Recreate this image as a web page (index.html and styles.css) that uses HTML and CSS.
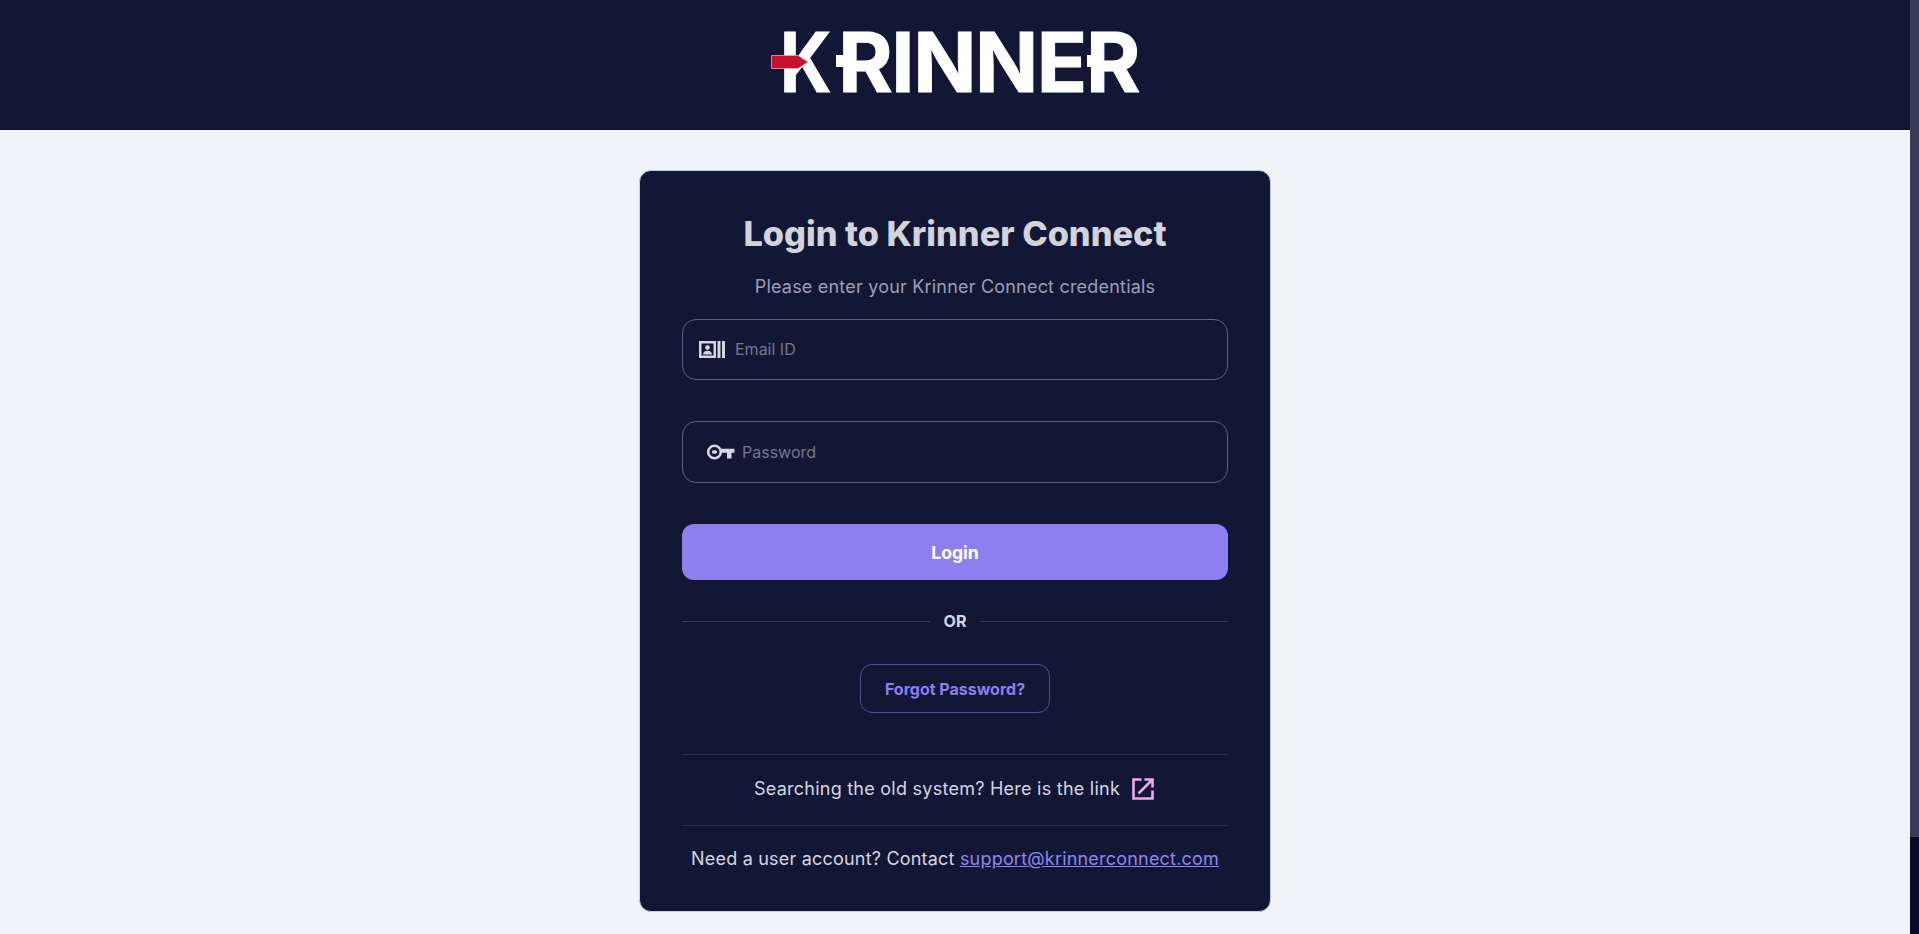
FILE: index.html
```html
<!DOCTYPE html>
<html lang="en">
<head>
<meta charset="utf-8">
<title>Login to Krinner Connect</title>
<link rel="stylesheet" href="styles.css">
</head>
<body>
<div class="shell">
<div class="content">
<header class="topbar">
  <div class="logo">
    <span class="logo-word"><span class="logo-k">K</span>RINNER</span>
    <span class="tick tick-r1"></span>
    <span class="tick tick-r2"></span>
    <svg class="logo-arrow" viewBox="0 0 38 14" width="38" height="14" aria-hidden="true"><path d="M.5.5H27L37 7 27 13.500H.5Z" fill="#c8102e" stroke="#e9a9b5" stroke-width=".8"/></svg>
  </div>
</header>
<main class="page">
  <section class="card">
    <h1 class="title">Login to Krinner Connect</h1>
    <p class="subtitle">Please enter your Krinner Connect credentials</p>
    <form class="form">
      <label class="field field-email">
        <svg class="icon-id" viewBox="0 0 26 17" width="26" height="17" aria-hidden="true">
          <path fill-rule="evenodd" d="M0 0H17V17H0ZM2.500 2.500V14.500H14.500V2.500Z" fill="#d4d6e4"/>
          <circle cx="8.500" cy="6.600" r="2.400" fill="#d4d6e4"/>
          <path d="M4 13.500c.3-2.800 2.200-3.800 4.500-3.800s4.200 1 4.500 3.800Z" fill="#d4d6e4"/>
          <rect x="18.500" y="0" width="3" height="17" fill="#d4d6e4"/>
          <rect x="23" y="0" width="3" height="17" fill="#d4d6e4"/>
        </svg>
        <input class="input input-email" type="text" placeholder="Email ID">
      </label>
      <label class="field field-pass">
        <svg class="icon-key" viewBox="0 0 28 16" width="28" height="16" aria-hidden="true">
          <circle cx="7.500" cy="8" r="6.300" fill="none" stroke="#d4d6e4" stroke-width="2.600"/>
          <rect x="4.800" y="6.200" width="5.400" height="3.600" rx="1.800" fill="#d4d6e4"/>
          <path d="M13 4.800H27.500V8.800H24.500V14.500H20V8.800H13Z" fill="#d4d6e4"/>
        </svg>
        <input class="input" type="password" placeholder="Password">
      </label>
      <button class="login" type="button">Login</button>
    </form>
    <div class="or"><span class="or-text">OR</span></div>
    <a class="forgot" href="#">Forgot Password?</a>
    <div class="row row-old">
      <span>Searching the old system? Here is the link</span>
      <svg class="icon-ext" viewBox="0 0 22 22" width="22" height="22" aria-hidden="true">
        <path d="M9.500 1.500H1.500V20.500H20.500V12.500" fill="none" stroke="#f0a8f0" stroke-width="2.600"/>
        <path d="M6.500 15.500L19 3M12.500 1.500H20.500V9.500" fill="none" stroke="#f0a8f0" stroke-width="2.600"/>
      </svg>
    </div>
    <div class="row row-contact">
      <span>Need a user account? Contact <a class="mail" href="#">support@krinnerconnect.com</a></span>
    </div>
  </section>
</main>
</div>
<div class="scrollbar"><div class="scrollbar-thumb"></div></div>
</div>
</body>
</html>
```
FILE: styles.css
```css
* { box-sizing: border-box; }
html, body { margin: 0; height: 100%; overflow: hidden; }
body {
  font-family: Inter, "Liberation Sans", sans-serif;
  background: #f0f4f9;
}
.shell { display: flex; height: 100vh; overflow: hidden; }
.content { flex: 1; min-width: 0; overflow: hidden; }
.scrollbar { width: 9px; background: #060a24; }
.scrollbar-thumb { height: 837px; background: #3a3d5a; }
.topbar {
  height: 130px;
  background: #121735;
  display: flex;
  justify-content: center;
}
.logo {
  position: relative;
  height: 130px;
  width: 368px;
  display: flex;
  justify-content: flex-end;
}
.logo-word {
  font-size: 83px;
  font-weight: 700;
  color: #fff;
  -webkit-text-stroke: 1px #fff;
  line-height: 124px;
  letter-spacing: -1.4px;
  white-space: nowrap;
}
.logo-k { display: inline-block; transform: scaleX(.86); transform-origin: left center; }
.tick { position: absolute; background: #fff; height: 12px; width: 10px; top: 55px; }
.tick-r1 { left: 65px; }
.tick-r2 { left: 316px; }
.logo-arrow { position: absolute; left: 0; top: 55px; }
.page { display: flex; justify-content: center; padding-top: 40px; }
.card {
  width: 632px;
  height: 742px;
  background: #121735;
  border: 1px solid #c5cbe8;
  border-radius: 12px;
  padding: 41px 42px 0;
  display: flex;
  flex-direction: column;
  align-items: stretch;
}
.title {
  margin: 0;
  padding-top: 2px;
  font-size: 34.300px;
  line-height: 40px;
  font-weight: 800;
  color: #d2d3dc;
  text-align: center;
}
.subtitle {
  margin: 19px 0 0;
  font-size: 18px;
  line-height: 28px;
  letter-spacing: .2px;
  color: #9c9fb6;
  text-align: center;
}
.form { display: flex; flex-direction: column; margin-top: 18px; }
.field {
  border: 1px solid #5c617d;
  border-radius: 14px;
  display: flex;
  align-items: center;
  margin-bottom: 41px;
}
.field-email { height: 61px; padding-left: 16px; gap: 10px; }
.field-pass { height: 62px; padding-left: 24px; gap: 7px; }
.input {
  flex: 1;
  background: transparent;
  border: 0;
  outline: 0;
  padding: 0;
  font: 400 16px Inter, sans-serif;
  color: #d5d6e2;
  min-width: 0;
}
.input-email { padding-bottom: 1px; }
.input::placeholder { color: #747891; opacity: 1; }
.login {
  height: 56px;
  border: 0;
  border-radius: 12px;
  background: #8d7ff0;
  color: #fff;
  font: 700 17.600px Inter, sans-serif;
}
.or {
  margin-top: 25px;
  height: 32px;
  display: flex;
  align-items: center;
  gap: 14px;
}
.or::before, .or::after { content: ""; flex: 1; height: 1px; background: #373c58; }
.or-text { font-size: 16px; font-weight: 700; color: #d5d6e2; }
.forgot {
  align-self: center;
  margin-top: 27px;
  width: 190px;
  height: 49px;
  padding-top: 1px;
  border: 1px solid #4f5194;
  border-radius: 12px;
  display: flex;
  align-items: center;
  justify-content: center;
  color: #8d7ff0;
  font-size: 16px;
  font-weight: 700;
  text-decoration: none;
}
.row {
  display: flex;
  align-items: center;
  justify-content: center;
  color: #d5d6e2;
  font-size: 18px;
  letter-spacing: .2px;
  border-top: 1px solid #2a2e4a;
}
.row-old { margin-top: 41px; height: 71px; padding: 0 2px 3px 0; gap: 12px; letter-spacing: .25px; }
.row-contact { height: 66px; }
.mail { color: #8e86ee; }
```
